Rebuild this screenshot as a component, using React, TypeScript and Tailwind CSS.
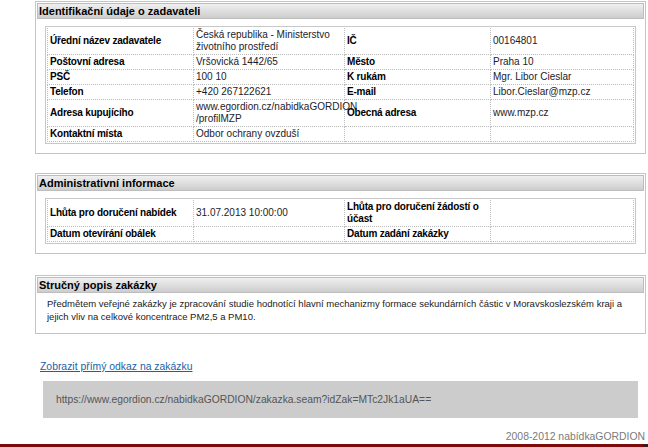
import React from 'react';

type Row = [React.ReactNode, React.ReactNode, React.ReactNode, React.ReactNode];

const zadavatel: Row[] = [
  ['Úřední název zadavatele', 'Česká republika - Ministerstvo životního prostředí', 'IČ', '00164801'],
  ['Poštovní adresa', 'Vršovická 1442/65', 'Město', 'Praha 10'],
  ['PSČ', '100 10', 'K rukám', 'Mgr. Libor Cieslar'],
  ['Telefon', '+420 267122621', 'E-mail', 'Libor.Cieslar@mzp.cz'],
  [
    'Adresa kupujícího',
    <>
      <span className="whitespace-nowrap">www.egordion.cz/nabidkaGORDION</span>
      <br />
      /profilMZP
    </>,
    'Obecná adresa',
    'www.mzp.cz',
  ],
  ['Kontaktní místa', 'Odbor ochrany ovzduší', '', ''],
];

const admin: Row[] = [
  [
    'Lhůta pro doručení nabídek',
    '31.07.2013 10:00:00',
    <>
      Lhůta pro doručení žádostí o
      <br />
      účast
    </>,
    '',
  ],
  ['Datum otevírání obálek', '', 'Datum zadání zakázky', ''],
];

const Panel = ({ title, children, className = '' }: { title: string; children: React.ReactNode; className?: string }) => (
  <div className={`border border-[#c4c4c4] p-[1px] ${className}`}>
    <div className="h-[16px] border border-[#bdbdbd] bg-linear-to-b from-[#f0f0f0] to-[#cdcdcd] pl-[1px] text-[11px] leading-[14px] font-bold text-black">
      {title}
    </div>
    {children}
  </div>
);

const InfoTable = ({ rows }: { rows: Row[] }) => (
  <div className="mx-[8px] border border-[#c8c8c8] p-[1px]">
    <table className="w-full table-fixed border-collapse">
      <colgroup>
        <col className="w-[146px]" />
        <col className="w-[151px]" />
        <col className="w-[146px]" />
        <col />
      </colgroup>
      <tbody>
        {rows.map((r, i) => (
          <tr key={i}>
            {r.map((c, j) => (
              <td
                key={j}
                className={`border border-dotted border-[#bcbcbc] px-[2px] py-[1px] align-middle leading-[12px] ${
                  j % 2 === 0
                    ? 'text-[10px] font-bold tracking-[-0.2px] text-black'
                    : 'text-[10px] text-[#1c1c2a]'
                } ${i === 0 ? 'border-t-0' : ''}`}
              >
                {c === '' ? <span>&nbsp;</span> : c}
              </td>
            ))}
          </tr>
        ))}
      </tbody>
    </table>
  </div>
);

export default function App() {
  return (
    <div className="relative w-[648px] h-[447px] overflow-hidden bg-white font-['Liberation_Sans',Arial,sans-serif]">
      <div className="pl-[35px] pr-[2px] pt-[1px]">
        <Panel title="Identifikační údaje o zadavateli">
          <div className="pt-[7px] pb-[8px]">
            <InfoTable rows={zadavatel} />
          </div>
        </Panel>

        <Panel title="Administrativní informace" className="mt-[19px]">
          <div className="pt-[7px] pb-[8px]">
            <InfoTable rows={admin} />
          </div>
        </Panel>

        <Panel title="Stručný popis zakázky" className="mt-[21px]">
          <p className="px-[10px] pt-[4px] pb-[9px] text-[9.5px] leading-[13px] text-[#1a1a1a] whitespace-nowrap">
            Předmětem veřejné zakázky je zpracování studie hodnotící hlavní mechanizmy formace sekundárních částic v Moravskoslezském kraji a
            <br />
            jejich vliv na celkové koncentrace PM2,5 a PM10.
          </p>
        </Panel>

        <div className="mt-[26px] pl-[5px] text-[10.4px] leading-[13px]">
          <a href="#" className="text-[#1d5fa6] underline">
            Zobrazit přímý odkaz na zakázku
          </a>
        </div>

        <div className="mt-[8px] mr-[8px] ml-[8px] h-[37px] bg-[#cccccc] pl-[13px] text-[10.3px] leading-[37px] text-[#555555]">
          https://www.egordion.cz/nabidkaGORDION/zakazka.seam?idZak=MTc2Jk1aUA==
        </div>

        <div className="mt-[12px] text-right text-[10.4px] leading-[13px] text-[#7a7a7a] pr-[1px]">
          2008-2012 nabídkaGORDION
        </div>
      </div>

      <div className="absolute bottom-0 left-0 flex h-[3px] w-full">
        <div className="w-[643px] bg-[#7d0b0b]" />
        <div className="flex-1 bg-[#3a1a1a]" />
      </div>
    </div>
  );
}
